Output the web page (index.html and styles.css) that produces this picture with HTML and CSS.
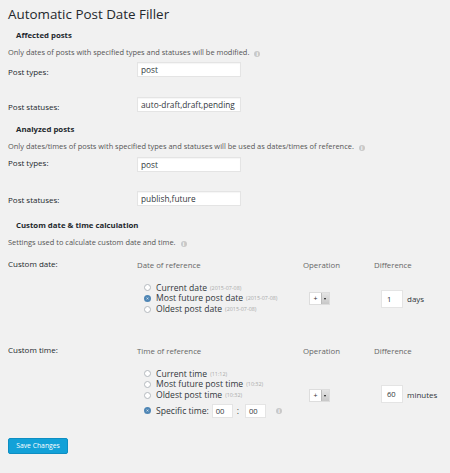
FILE: index.html
```html
<!DOCTYPE html>
<html>
<head>
<meta charset="utf-8">
<link rel="stylesheet" href="styles.css">
</head>
<body>
<div class="wrap">
  <h1 class="title">Automatic Post Date Filler</h1>

  <h2 class="sec sec-1">Affected posts</h2>
  <p class="desc">Only dates of posts with specified types and statuses will be modified. <span class="info">i</span></p>
  <div class="row row-a1">
    <div class="label">Post types:</div>
    <div class="field"><span class="text-input">post</span></div>
  </div>
  <div class="row row-a2">
    <div class="label">Post statuses:</div>
    <div class="field"><span class="text-input">auto-draft,draft,pending</span></div>
  </div>

  <h2 class="sec sec-2">Analyzed posts</h2>
  <p class="desc">Only dates/times of posts with specified types and statuses will be used as dates/times of reference. <span class="info">i</span></p>
  <div class="row row-b1">
    <div class="label">Post types:</div>
    <div class="field"><span class="text-input">post</span></div>
  </div>
  <div class="row row-b2">
    <div class="label">Post statuses:</div>
    <div class="field"><span class="text-input">publish,future</span></div>
  </div>

  <h2 class="sec sec-3">Custom date &amp; time calculation</h2>
  <p class="desc">Settings used to calculate custom date and time. <span class="info">i</span></p>

  <div class="calc calc-date">
    <div class="label">Custom date:</div>
    <div class="calc-grid">
      <div class="colhead">Date of reference</div>
      <div class="colhead">Operation</div>
      <div class="colhead">Difference</div>
      <div class="radios">
        <div class="radio"><span class="dot"></span>Current date <small>(2015-07-08)</small></div>
        <div class="radio"><span class="dot on"></span>Most future post date <small>(2015-07-08)</small></div>
        <div class="radio"><span class="dot"></span>Oldest post date <small>(2015-07-08)</small></div>
      </div>
      <div class="op"><span class="select"><span class="sel-val">+</span><span class="sel-btn"></span></span></div>
      <div class="diff"><span class="num-input">1</span><span class="unit">days</span></div>
    </div>
  </div>

  <div class="calc calc-time">
    <div class="label">Custom time:</div>
    <div class="calc-grid">
      <div class="colhead">Time of reference</div>
      <div class="colhead">Operation</div>
      <div class="colhead">Difference</div>
      <div class="radios">
        <div class="radio"><span class="dot"></span>Current time <small>(11:12)</small></div>
        <div class="radio"><span class="dot"></span>Most future post time <small>(10:32)</small></div>
        <div class="radio"><span class="dot"></span>Oldest post time <small>(10:32)</small></div>
        <div class="radio specific"><span class="dot on"></span>Specific time: <span class="time-input">00</span><span class="colon">:</span><span class="time-input">00</span><span class="info info-t">i</span></div>
      </div>
      <div class="op op-t"><span class="select"><span class="sel-val">+</span><span class="sel-btn"></span></span></div>
      <div class="diff diff-t"><span class="num-input">60</span><span class="unit">minutes</span></div>
    </div>
  </div>

  <div class="submit"><span class="button">Save Changes</span></div>
</div>
</body>
</html>
```
FILE: styles.css
```css
html, body {
  margin: 0;
  padding: 0;
  background: #f1f1f1;
}
body {
  font-family: "Open Sans", "Liberation Sans", sans-serif;
  color: #444;
  width: 450px;
  height: 473px;
  overflow: hidden;
}
.wrap {
  padding: 0 8px;
}
.title {
  margin: 4px 0 0;
  font-size: 13.4px;
  font-weight: 400;
  line-height: 20px;
  color: #23282d;
}
.sec {
  margin: 0;
  padding-left: 8px;
  font-size: 7.8px;
  font-weight: 700;
  line-height: 14px;
  color: #23282d;
}
.sec-1 { margin-top: 4px; }
.sec-2 { margin-top: 3px; }
.sec-3 { margin-top: 4px; }
.desc {
  margin: 4px 0 0;
  font-size: 7.45px;
  line-height: 12px;
  color: #555;
  white-space: nowrap;
}
.info {
  display: inline-block;
  width: 6px;
  height: 6px;
  border-radius: 50%;
  background: #c8c8c8;
  color: #fff;
  font-size: 5px;
  line-height: 6px;
  text-align: center;
  font-weight: 700;
  vertical-align: -1px;
  margin-left: 3px;
}
.row {
  display: grid;
  grid-template-columns: 129px 1fr;
}
.label {
  font-size: 8px;
  line-height: 12px;
  color: #23282d;
}
.row-a1 { height: 33px; }
.row-a1 .label { padding-top: 8px; }
.row-a1 .field { padding-top: 4px; }
.row-a2 { height: 28px; }
.row-a2 .label { padding-top: 10px; }
.row-a2 .field { padding-top: 6px; }
.row-b1 { height: 34px; }
.row-b1 .label { padding-top: 5px; }
.row-b1 .field { padding-top: 5px; }
.row-b2 { height: 28px; }
.row-b2 .label { padding-top: 8px; }
.row-b2 .field { padding-top: 5px; }
.text-input {
  display: block;
  box-sizing: border-box;
  width: 104px;
  height: 15px;
  padding: 0 3px;
  background: #fff;
  border: 1px solid #e4e4e4;
  box-shadow: inset 0 1px 1px rgba(0,0,0,0.04);
  font-size: 8.3px;
  line-height: 13px;
  color: #32373c;
}
.calc {
  display: grid;
  grid-template-columns: 129px 1fr;
  align-items: start;
}
.calc-date { margin-top: 10px; height: 86px; }
.calc-time { height: 86px; }
.calc .label { line-height: 12px; }
.calc-grid {
  display: grid;
  grid-template-columns: 166px 71px 1fr;
  grid-template-rows: 12px auto;
  row-gap: 12.6px;
  align-items: center;
  align-content: start;
}
.colhead {
  font-size: 7.8px;
  line-height: 12px;
  color: #666;
  padding-top: 1px;
}
.radios {
  padding-left: 7px;
}
.radio {
  display: flex;
  align-items: center;
  font-size: 8.6px;
  line-height: 10.8px;
  color: #32373c;
  white-space: nowrap;
}
.radio small {
  font-size: 5.4px;
  color: #aaa;
  margin-left: 3px;
}
.dot {
  box-sizing: border-box;
  width: 7px;
  height: 7px;
  border-radius: 50%;
  border: 1px solid #b4b9be;
  background: #fff;
  margin-right: 5px;
  flex: none;
}
.dot.on {
  border: 2px solid #4f86b5;
  background: #fff;
  box-shadow: inset 0 0 0 1px #4f86b5;
}
.specific {
  margin-top: 3px;
  line-height: 14px;
}
.time-input {
  display: inline-block;
  box-sizing: border-box;
  width: 21px;
  height: 14px;
  padding: 0 3px;
  background: #fff;
  border: 1px solid #e4e4e4;
  font-size: 7.6px;
  line-height: 12px;
  margin-left: 3px;
}
.colon {
  margin: 0 3px 0 4px;
}
.info-t {
  margin-left: 10px;
}
.op {
  padding-left: 6px;
}
.op-t {
  padding-top: 4px;
}
.diff-t {
  padding-top: 2px;
}
.select {
  display: flex;
  width: 21px;
  height: 13px;
  box-sizing: border-box;
  border: 1px solid #ddd;
  background: #fff;
}
.sel-val {
  flex: 1;
  font-size: 7px;
  line-height: 11px;
  text-align: center;
  color: #333;
}
.sel-btn {
  position: relative;
  width: 7px;
  background: linear-gradient(#e4e4e4, #c8c8c8);
  border-left: 1px solid #bbb;
}
.sel-btn::after {
  content: "";
  position: absolute;
  left: 2px;
  top: 5px;
  border-left: 1.5px solid transparent;
  border-right: 1.5px solid transparent;
  border-top: 2px solid #111;
}
.diff {
  display: flex;
  align-items: center;
  padding-left: 7px;
}
.num-input {
  box-sizing: border-box;
  width: 22px;
  height: 18px;
  padding: 0 5px;
  background: #fff;
  border: 1px solid #e4e4e4;
  font-size: 7.6px;
  line-height: 16px;
  color: #32373c;
}
.unit {
  margin-left: 4px;
  font-size: 8px;
  color: #32373c;
}
.submit {
  display: flex;
  padding-top: 8px;
}
.button {
  box-sizing: border-box;
  width: 60px;
  height: 16px;
  background: #12a1d8;
  border: 1px solid #0e8ec2;
  border-radius: 2px;
  color: #fff;
  font-size: 6.8px;
  line-height: 14px;
  text-align: center;
}
```
